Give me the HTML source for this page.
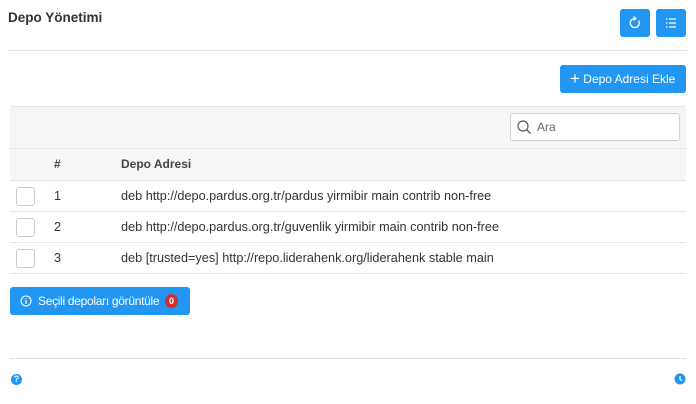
<!DOCTYPE html>
<html><head><style>
body{margin:0;width:696px;height:404px;background:#fff;font-family:"Liberation Sans",sans-serif;color:#333;position:relative;overflow:hidden}
.a{position:absolute}
.btn{background:#2196f3;border-radius:3px;color:#fff}
.t{font-size:12.7px}
</style></head><body>
<div class="a" style="left:8px;top:10px;font-size:13.5px;font-weight:bold;color:#333">Depo Yönetimi</div>
<div class="a btn" style="left:620px;top:9px;width:30px;height:28px"><svg width="30" height="28"><path d="M18.5 11.5 A4.5 4.5 0 1 1 14.5 9.5" fill="none" stroke="#fff" stroke-width="1.3"/><path d="M13.5 7.5 L16 9.5 L13.5 11.5" fill="none" stroke="#fff" stroke-width="1.2"/></svg></div>
<div class="a btn" style="left:656px;top:9px;width:30px;height:28px"><svg width="30" height="28"><g stroke="#fff" stroke-width="1.3"><path d="M10 10h1.5M13 10h7M10 14h1.5M13 14h7M10 18h1.5M13 18h7"/></g></svg></div>
<div class="a" style="left:8px;top:50px;width:680px;height:1px;background:#e3e3e3"></div>
<div class="a btn" style="left:560px;top:65px;width:126px;height:28px;font-size:12px;line-height:28px"><span style="font-size:17px;margin-left:10px;vertical-align:-1px">+</span> Depo Adresi Ekle</div>
<div class="a" style="left:10px;top:106px;width:676px;height:42px;background:#f6f6f6;border-top:1px solid #e8e8e8"></div>
<div class="a" style="left:510px;top:113px;width:168px;height:26px;background:#fff;border:1px solid #d0d0d0;border-radius:3px"><svg class="a" style="left:5px;top:5px" width="16" height="16"><circle cx="7" cy="7" r="5" fill="none" stroke="#555" stroke-width="1.2"/><path d="M10.5 10.5L14.5 14.5" stroke="#555" stroke-width="1.3"/></svg><span class="a" style="left:26px;top:6px;font-size:12px;color:#666">Ara</span></div>
<div class="a" style="left:10px;top:148px;width:676px;height:31px;background:#f6f6f6;border-top:1px solid #e8e8e8;border-bottom:1px solid #e3e3e3"></div>
<div class="a" style="left:54px;top:157px;font-size:12px;font-weight:bold;color:#444">#</div>
<div class="a" style="left:121px;top:157px;font-size:12px;font-weight:bold;color:#444">Depo Adresi</div>
<div class="a" style="left:10px;top:211px;width:676px;height:1px;background:#e6e6e6"></div>
<div class="a" style="left:10px;top:242px;width:676px;height:1px;background:#e6e6e6"></div>
<div class="a" style="left:10px;top:273px;width:676px;height:1px;background:#e6e6e6"></div>
<div class="a" style="left:16px;top:187px;width:17px;height:17px;border:1px solid #ccc;border-radius:3px"></div>
<div class="a" style="left:16px;top:218px;width:17px;height:17px;border:1px solid #ccc;border-radius:3px"></div>
<div class="a" style="left:16px;top:249px;width:17px;height:17px;border:1px solid #ccc;border-radius:3px"></div>
<div class="a t" style="left:54px;top:189px">1</div>
<div class="a t" style="left:54px;top:220px">2</div>
<div class="a t" style="left:54px;top:251px">3</div>
<div class="a t" style="left:121px;top:189px">deb http://depo.pardus.org.tr/pardus yirmibir main contrib non-free</div>
<div class="a t" style="left:121px;top:220px">deb http://depo.pardus.org.tr/guvenlik yirmibir main contrib non-free</div>
<div class="a t" style="left:121px;top:251px">deb [trusted=yes] http://repo.liderahenk.org/liderahenk stable main</div>
<div class="a btn" style="left:10px;top:287px;width:180px;height:28px;font-size:12px;line-height:28px;letter-spacing:-0.3px"><svg class="a" style="left:10px;top:8px" width="12" height="12"><circle cx="6" cy="6" r="5" fill="none" stroke="#fff" stroke-width="1.1"/><path d="M6 5v4M6 3.2v.8" stroke="#fff" stroke-width="1.2"/></svg><span style="margin-left:28px">Seçili depoları görüntüle</span><span class="a" style="left:155px;top:7px;width:13px;height:14px;border-radius:7px;background:#d32f2f;font-size:9px;font-weight:bold;line-height:14px;text-align:center;letter-spacing:0">0</span></div>
<div class="a" style="left:10px;top:358px;width:676px;height:1px;background:#e3e3e3"></div>
<div class="a" style="left:11px;top:374px;width:11px;height:11px;border-radius:50%;background:#2196f3;color:#fff;font-size:9px;font-weight:bold;line-height:11px;text-align:center">?</div>
<svg class="a" style="left:674px;top:373px" width="12" height="12"><circle cx="6" cy="6" r="5.5" fill="#2196f3"/><path d="M6 3v3.3l2 1.5" stroke="#fff" stroke-width="1.2" fill="none"/></svg>
</body></html>
